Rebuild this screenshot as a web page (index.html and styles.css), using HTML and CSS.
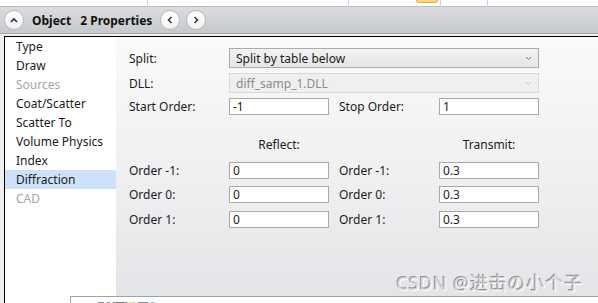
FILE: index.html
```html
<!DOCTYPE html>
<html lang="en">
<head>
  <meta charset="UTF-8">
  <title>Object Properties</title>
  <link rel="stylesheet" href="styles.css">
</head>
<body>
  <!-- Ribbon edge -->
  <div class="ribbon-edge">
    <span class="tick t1"></span>
    <span class="tick t2"></span>
    <span class="tab-mark"></span>
    <span class="tick t3"></span>
    <span class="tick t4"></span>
  </div>

  <!-- Header -->
  <div class="header">
    <span class="round-btn">
      <svg width="8" height="6" viewBox="0 0 8 6"><path d="M1 5 L4 2 L7 5" fill="none" stroke="#333" stroke-width="1.6"/></svg>
    </span>
    <span class="title">Object</span>
    <span class="title count">2 Properties</span>
    <span class="round-btn nav">
      <svg width="6" height="8" viewBox="0 0 6 8"><path d="M4.5 1 L1.5 4 L4.5 7" fill="none" stroke="#333" stroke-width="1.5"/></svg>
    </span>
    <span class="round-btn nav">
      <svg width="6" height="8" viewBox="0 0 6 8"><path d="M1.5 1 L4.5 4 L1.5 7" fill="none" stroke="#333" stroke-width="1.5"/></svg>
    </span>
  </div>

  <!-- Properties panel -->
  <div class="panel">
    <ul class="side-list">
      <li>Type</li>
      <li>Draw</li>
      <li class="disabled">Sources</li>
      <li>Coat/Scatter</li>
      <li>Scatter To</li>
      <li>Volume Physics</li>
      <li>Index</li>
      <li class="selected">Diffraction</li>
      <li class="disabled">CAD</li>
    </ul>

    <div class="content">
      <div class="form-top">
        <label>Split:</label>
        <div class="select">
          <span>Split by table below</span>
          <svg width="7" height="5" viewBox="0 0 7 5"><path d="M1 1 L3.5 3.5 L6 1" fill="none" stroke="#777" stroke-width="1"/></svg>
        </div>

        <label>DLL:</label>
        <div class="select disabled">
          <span>diff_samp_1.DLL</span>
          <svg width="7" height="5" viewBox="0 0 7 5"><path d="M1 1 L3.5 3.5 L6 1" fill="none" stroke="#c4c4c4" stroke-width="1"/></svg>
        </div>

        <label>Start Order:</label>
        <div class="field">-1</div>
        <label>Stop Order:</label>
        <div class="field">1</div>
      </div>

      <div class="form-table">
        <span></span>
        <div class="col-head">Reflect:</div>
        <span></span>
        <div class="col-head">Transmit:</div>

        <label>Order -1:</label>
        <div class="field">0</div>
        <label>Order -1:</label>
        <div class="field">0.3</div>

        <label>Order 0:</label>
        <div class="field">0</div>
        <label>Order 0:</label>
        <div class="field">0.3</div>

        <label>Order 1:</label>
        <div class="field">0</div>
        <label>Order 1:</label>
        <div class="field">0.3</div>
      </div>
    </div>

    <div class="watermark">CSDN @进击の小个子</div>
  </div>

  <!-- Window below, peeking in: only the tops of its row show -->
  <div class="under-window">
    <span class="peek dark w6"></span>
    <span class="peek blue w3"></span>
    <span class="peek dark w14"></span>
    <span class="peek gold w5"></span>
    <span class="peek dark w10"></span>
    <span class="peek blue w3"></span>
  </div>
</body>
</html>
```

FILE: styles.css
```css
* {
  margin: 0;
  padding: 0;
  box-sizing: border-box;
}

html, body {
  height: 100%;
  overflow: hidden;
}

body {
  font-family: 'Noto Sans', 'Noto Sans CJK SC', sans-serif;
  font-size: 12px;
  color: #1b1b1b;
  background-color: #eff0f2;
  display: flex;
  flex-direction: column;
  position: relative;
}

/* thin strip of the ribbon above */
.ribbon-edge {
  height: 6px;
  background-color: #ffffff;
  display: flex;
  flex-shrink: 0;
}

.tick {
  width: 1px;
  height: 5px;
  background-color: #c9d1de;
}

.t1 { margin-left: 147px; }
.t2 { margin-left: 200px; }
.t3 { margin-left: 2px; }
.t4 { margin-left: 46px; }

.tab-mark {
  width: 22px;
  height: 3px;
  margin-left: 67px;
  background-color: #fcd77c;
  border: 1px solid #e3ad3e;
  border-top: none;
  border-radius: 0 0 3px 3px;
}

.header {
  height: 28px;
  flex-shrink: 0;
  display: flex;
  align-items: center;
  padding-left: 4px;
  background: linear-gradient(#dadcdf, #c6c9cd);
  border-top: 1px solid #b9bcc0;
  border-bottom: 1px solid #a7aaae;
}

.round-btn {
  width: 20px;
  height: 20px;
  border-radius: 50%;
  background: linear-gradient(#ffffff, #f1f1f1);
  border: 1px solid #b8b8b8;
  display: flex;
  align-items: center;
  justify-content: center;
}

.round-btn.nav {
  margin-left: 6px;
}

.title {
  font-weight: bold;
  font-size: 12px;
  margin-left: 8px;
  color: #111;
}

.title.count {
  margin-left: 9px;
  margin-right: 2px;
}

.panel {
  flex: 1;
  display: flex;
  margin-top: 2px;
  margin-left: 4px;
  border-top: 1px solid #000;
  border-left: 1px solid #000;
  position: relative;
}

.side-list {
  list-style: none;
  width: 111px;
  background-color: #ffffff;
}

.side-list li {
  height: 19px;
  line-height: 19px;
  padding-left: 11px;
}

.side-list li.disabled {
  color: #a6a6a6;
}

.side-list li.selected {
  background-color: #cde2f8;
}

.content {
  flex: 1;
  padding: 11px 0 0 13px;
  background: linear-gradient(#fafafa, #eeeef0 60%, #e3e4e7);
}

.form-top,
.form-table {
  display: grid;
  grid-template-columns: 90px 100px 90px 100px;
  column-gap: 10px;
  align-items: center;
}

.form-top {
  grid-template-rows: 20px 20px 17px;
  row-gap: 5px;
}

.form-table {
  margin-top: 23px;
  grid-template-rows: 16px 17px 17px 17px;
  row-gap: 7.5px;
}

label {
  white-space: nowrap;
}

.select {
  grid-column: 2 / 5;
  height: 20px;
  display: flex;
  align-items: center;
  justify-content: space-between;
  padding: 0 6px 0 6px;
  border: 1px solid #acacac;
  background: linear-gradient(#f2f2f2, #e6e6e6);
}

.select.disabled {
  color: #8c8c8c;
  border-color: #d9d9d9;
  background: #efefef;
}

.field {
  height: 17px;
  line-height: 15px;
  padding-left: 3px;
  border: 1px solid #a9a9a9;
  background-color: #ffffff;
}

.col-head {
  text-align: center;
  margin-bottom: 3px;
}

.watermark {
  position: absolute;
  right: 15px;
  bottom: 8px;
  font-size: 18px;
  color: #d6d6d8;
  text-shadow: -1px -1px 0 #8e8e90, 1px 1px 0 #ffffff;
  letter-spacing: 0.8px;
}

/* another window overlapping the bottom edge */
.under-window {
  position: absolute;
  left: 70px;
  right: 0;
  top: 296px;
  height: 20px;
  display: flex;
  align-items: flex-start;
  gap: 3px;
  padding: 5px 0 0 27px;
  background-color: #ffffff;
  border-top: 1px solid #a3a3a3;
  border-left: 1px solid #a3a3a3;
}

.peek {
  height: 2px;
  opacity: 0.6;
}

.peek.dark { background-color: #3a3a3a; }
.peek.blue { background-color: #2e6fd0; }
.peek.gold { background-color: #d9a632; }

.w3 { width: 3px; }
.w5 { width: 5px; }
.w6 { width: 6px; }
.w10 { width: 10px; }
.w14 { width: 14px; }
```
